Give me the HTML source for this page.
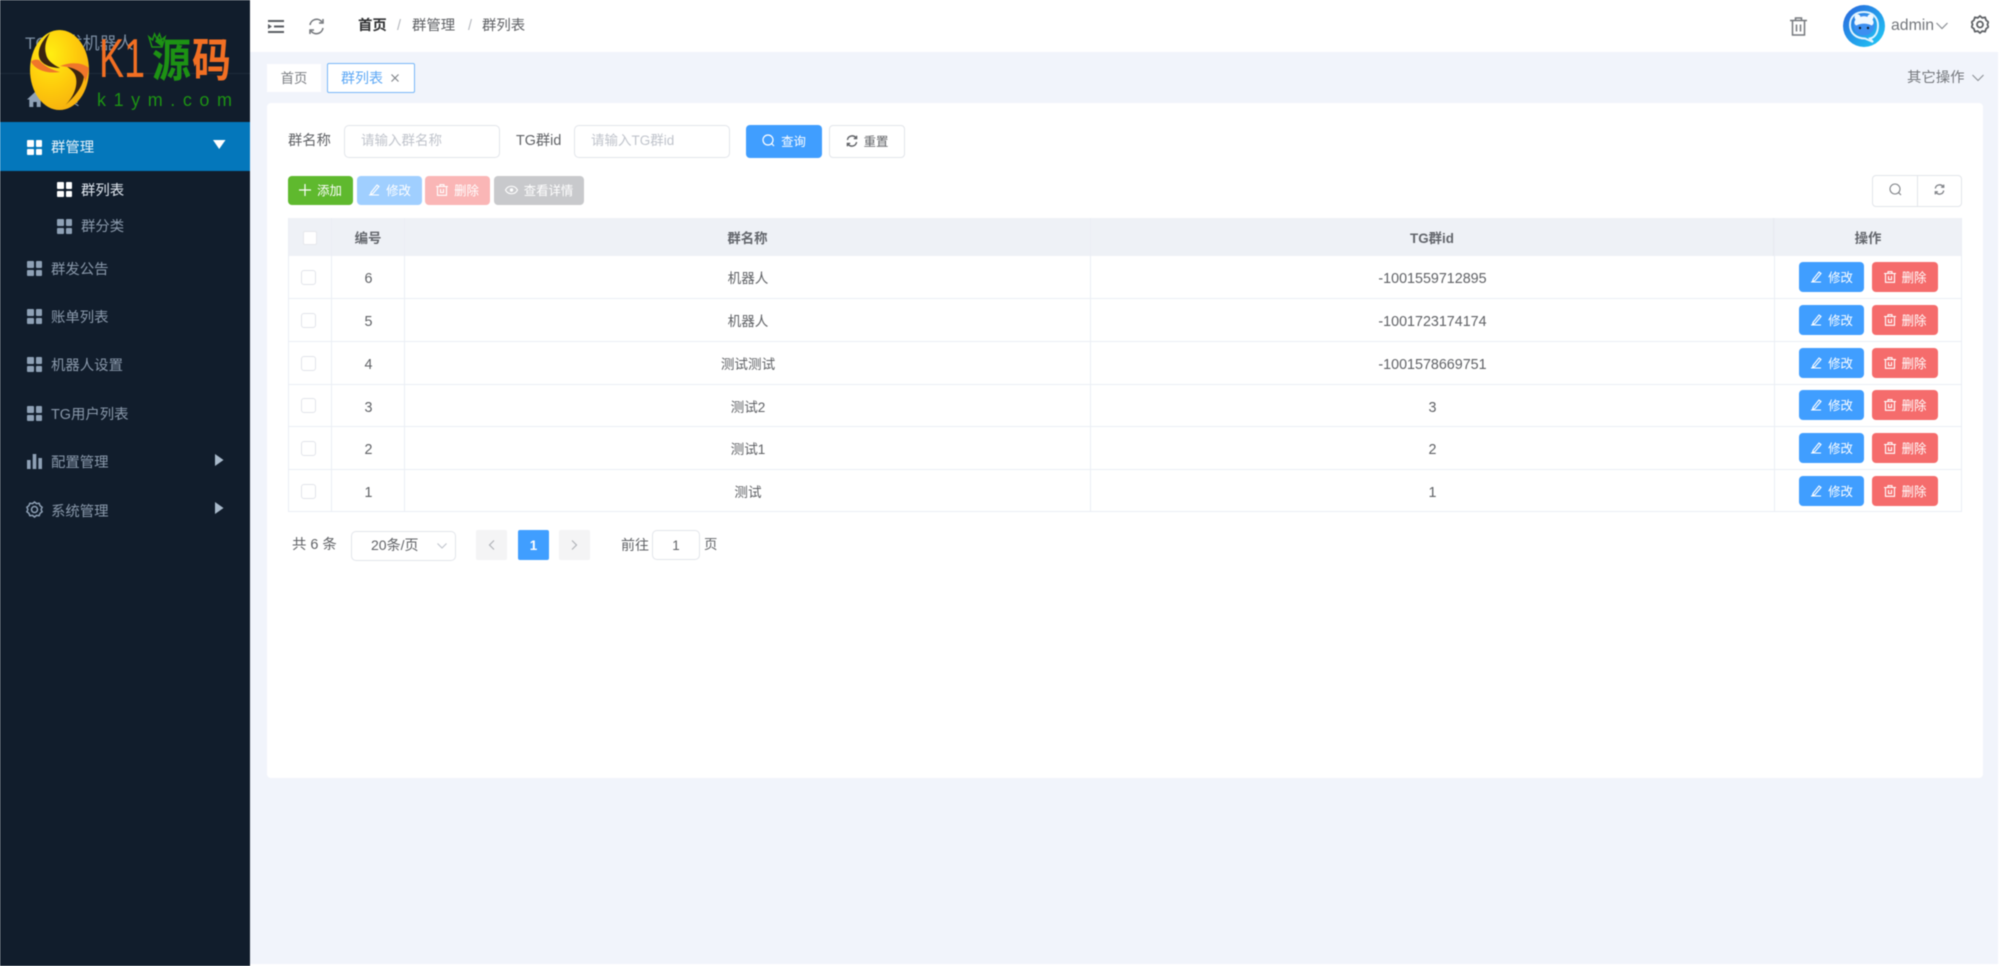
<!DOCTYPE html>
<html lang="zh">
<head>
<meta charset="utf-8">
<title>群列表</title>
<style>
html,body{margin:0;padding:0;width:2000px;height:966px;overflow:hidden;background:#fff}
body{font-family:"Liberation Sans","Noto Sans CJK SC",sans-serif;color:#606266}
#p{position:absolute;left:0;top:0;width:2000px;height:966px;overflow:hidden;filter:blur(.5px)}
.a{position:absolute;box-sizing:border-box;white-space:nowrap}
.c{display:flex;align-items:center;justify-content:center}
.m{color:#8a99ab;font-size:14.4px;line-height:20px;left:51px}
.g{position:absolute;width:15px;height:15px}
.g i{position:absolute;width:6.5px;height:6.5px;background:#8fa1b6;border-radius:1px}
.g i:nth-child(1){left:0;top:0}.g i:nth-child(2){right:0;top:0}.g i:nth-child(3){left:0;bottom:0}.g i:nth-child(4){right:0;bottom:0}
.w i{background:#fff}
.in{border:1.4px solid #e2e5ea;border-radius:5px;background:#fff}
.ph{color:#c0c4cc;font-size:13.5px}
.btn{border-radius:4px;color:#fff;font-size:12.4px;gap:6px}
.up{padding-bottom:2px}
.btn svg{flex:none}
.h{background:#eef1f6;height:38px;top:218px;color:#63666c;font-size:13.4px;font-weight:700;border-right:1px solid #e7eaf0}
.d{font-size:13.6px;color:#606266}
.n{font-size:14.3px;color:#606266;padding-top:3px}
.ln{height:1.3px;background:#ebeef5;left:288px;width:1674px}
.vl{width:1.3px;background:#ebeef5;top:218px;height:294px}
.cb{width:15px;height:15px;left:301px;border:1.3px solid #e2e4ea;border-radius:3px;background:#fff}
</style>
</head>
<body>
<div id="p">
<!-- content background -->
<div class="a" style="left:250px;top:52px;width:1748px;height:912px;background:#f1f4fb"></div>
<!-- sidebar -->
<div class="a" style="left:0;top:0;width:250px;height:966px;background:#111d2c"></div>
<div class="a" style="left:0;top:73px;width:250px;height:1px;background:#1d2a3a"></div>
<div class="a" style="left:25px;top:33px;font-size:17px;line-height:22px;color:#7c8ea3">TG群发机器人</div>
<svg class="a" style="left:27px;top:92px" width="16" height="15" viewBox="0 0 16 15"><path d="M8 0L0 7.5h2.3V15h4v-5h3.4v5h4V7.5H16z" fill="#8fa1b6"/></svg>
<div class="a m" style="left:51px;top:91px">首页</div>
<div class="a" style="left:0;top:122px;width:250px;height:49px;background:#0477bb"></div>
<div class="g w" style="left:27px;top:140px"><i></i><i></i><i></i><i></i></div>
<div class="a m" style="top:138px;color:#e8f1f8">群管理</div>
<svg class="a" style="left:213px;top:139px" width="13" height="11"><path d="M0 1h12.5L6.2 10z" fill="#fff"/></svg>
<div class="g w" style="left:57px;top:182px"><i></i><i></i><i></i><i></i></div>
<div class="a m" style="left:81px;top:181px;color:#dfe6ee">群列表</div>
<div class="g" style="left:57px;top:219px"><i></i><i></i><i></i><i></i></div>
<div class="a m" style="left:81px;top:217px">群分类</div>
<div class="g" style="left:27px;top:261px"><i></i><i></i><i></i><i></i></div>
<div class="a m" style="top:260px">群发公告</div>
<div class="g" style="left:27px;top:309px"><i></i><i></i><i></i><i></i></div>
<div class="a m" style="top:308px">账单列表</div>
<div class="g" style="left:27px;top:357px"><i></i><i></i><i></i><i></i></div>
<div class="a m" style="top:356px">机器人设置</div>
<div class="g" style="left:27px;top:406px"><i></i><i></i><i></i><i></i></div>
<div class="a m" style="top:405px">TG用户列表</div>
<svg class="a" style="left:27px;top:454px" width="15" height="15"><path d="M0 6h3.6v9H0zM5.7 0h3.6v15H5.7zM11.4 4H15v11h-3.6z" fill="#8fa1b6"/></svg>
<div class="a m" style="top:453px">配置管理</div>
<svg class="a" style="left:215px;top:454px" width="9" height="12"><path d="M0 0l8.5 6L0 12z" fill="#a9bacb"/></svg>
<svg class="a" style="left:26px;top:501px" width="17" height="17" viewBox="0 0 17 17"><path d="M8.5 1l2 1.6 2.6-.3 1 2.4 2 1.6-1 2.2 1 2.2-2 1.6-1 2.400-2.600-.3-2 1.600-2-1.600-2.600.3-1-2.400-2-1.600 1-2.200-1-2.200 2-1.600 1-2.400 2.600.3z" fill="none" stroke="#8fa1b6" stroke-width="1.500"/><circle cx="8.500" cy="8.500" r="3" fill="none" stroke="#8fa1b6" stroke-width="1.500"/></svg>
<div class="a m" style="top:502px">系统管理</div>
<svg class="a" style="left:215px;top:502px" width="9" height="12"><path d="M0 0l8.500 6L0 12z" fill="#a9bacb"/></svg>
<!-- logo -->
<svg class="a" style="left:20px;top:20px" width="225" height="100" viewBox="20 20 225 100">
<defs>
<radialGradient id="y" cx=".35" cy=".3" r=".85"><stop offset="0" stop-color="#ffee12"/><stop offset=".5" stop-color="#fecb0c"/><stop offset="1" stop-color="#f5a90f"/></radialGradient>
</defs>
<ellipse cx="59.500" cy="70" rx="29.500" ry="40" fill="url(#y)"/>
<path d="M50 33C40 42 35 55 42 62C47 67 55 68 60 68C52 64 47 60 46 54C44 47 46 40 50 33z" fill="#3a2510"/>
<path d="M66 66C74 66 84 68 84 75C84 86 74 98 62 108C72 100 78 88 76 78C75 72 70 69 66 66z" fill="#3a2510"/>
<path d="M31 62C36 70 46 74 60 72C52 70 44 66 39 60C36 59 32 60 31 62z" fill="#f0762a"/>
<path d="M60 66C70 62 82 62 89 68C88 74 87 78 85 82C85 72 74 67 60 66z" fill="#f0762a"/>
<text x="99" y="77" font-family="Liberation Sans" font-size="55" fill="#f26f23" textLength="46" lengthAdjust="spacingAndGlyphs">K1</text>
<g transform="translate(0,80) scale(1,1.180) translate(0,-80)">
<text x="152" y="77" font-family="Noto Sans CJK SC" font-weight="700" font-size="39" fill="#1d9214">源</text>
<text x="192" y="77" font-family="Noto Sans CJK SC" font-weight="700" font-size="39" fill="#f26f23">码</text>
</g>
<path d="M149 37l3 10h10l3-10-3.500 3-2-6-2.500 5-2.500-5-2 6z" fill="none" stroke="#1d9214" stroke-width="1.500"/>
<text x="97" y="106" font-family="Liberation Sans" font-size="18" fill="#1d9214" textLength="135">k1ym.com</text>
</svg>
<!-- top bar -->
<svg class="a" style="left:268px;top:20px" width="16" height="13" viewBox="0 0 16 13"><path d="M0 1h16M6 6.500h10M0 12h16" stroke="#5b5e63" stroke-width="2" fill="none"/><path d="M0 4l4 2.500L0 9z" fill="#5b5e63"/></svg>
<svg class="a" style="left:308px;top:18px" width="17" height="17" viewBox="0 0 17 17"><path d="M2 7a6.700 6.700 0 0 1 12-3M15 10a6.700 6.700 0 0 1-12 3" fill="none" stroke="#73767b" stroke-width="1.500"/><path d="M15 1v4h-4M2 16v-4h4" fill="none" stroke="#73767b" stroke-width="1.500"/></svg>
<div class="a" style="left:358px;top:16px;font-size:14.400px;line-height:20px;font-weight:700;color:#303133">首页</div>
<div class="a" style="left:397px;top:16px;font-size:14.400px;line-height:20px;color:#b4b7bd">/</div>
<div class="a" style="left:412px;top:16px;font-size:14.400px;line-height:20px">群管理</div>
<div class="a" style="left:468px;top:16px;font-size:14.400px;line-height:20px;color:#b4b7bd">/</div>
<div class="a" style="left:482px;top:16px;font-size:14.400px;line-height:20px">群列表</div>
<svg class="a" style="left:1790px;top:17px" width="17" height="19" viewBox="0 0 17 19"><path d="M0 3.500h17M5.500 3V1h6v2M2.500 4v14h12V4M6.500 7.500v7M10.500 7.500v7" fill="none" stroke="#75787d" stroke-width="1.500"/></svg>
<svg class="a" style="left:1843px;top:5px" width="42" height="42" viewBox="0 0 42 42">
<defs><linearGradient id="av" x1="0" y1="0" x2="1" y2="1"><stop offset="0" stop-color="#2a63dc"/><stop offset="1" stop-color="#1fcdf6"/></linearGradient></defs>
<circle cx="21" cy="21" r="21" fill="url(#av)"/>
<path d="M21 7c8.500 0 14 5.500 14 13.500 0 7-3 12-8 13l3 3.500-8-3.500c-8.500 0-15-5-15-13.500S12.500 7 21 7z" fill="none" stroke="#dff3ff" stroke-width="2"/>
<circle cx="21" cy="20" r="10.500" fill="#3d8ff0"/>
<path d="M12.500 14.500a3 3 0 1 1 5-2.500c2-1 5-1 7 0a3 3 0 1 1 5 2.500c2 3 1 5-1 6-4-2.500-11-2.500-15 0-2-1-3-3-1-6z" fill="#f0f8ff"/>
<circle cx="17" cy="23" r="1.200" fill="#123"/><circle cx="25" cy="23" r="1.200" fill="#123"/>
</svg>
<div class="a" style="left:1891px;top:16px;font-size:15.800px;line-height:20px;color:#74777c">admin</div>
<svg class="a" style="left:1936px;top:22px" width="12" height="8"><path d="M.500 1l5.500 5.500L11.500 1" fill="none" stroke="#8b8e93" stroke-width="1.200"/></svg>
<svg class="a" style="left:1971px;top:15px" width="18" height="19" viewBox="0 0 18 19"><path d="M9 1l2.200 1.900 2.900-.5 1 2.800 2.300 1.800-1 2.500 1 2.500-2.300 1.800-1 2.800-2.900-.5L9 18l-2.200-1.900-2.900.5-1-2.800L.6 12l1-2.500-1-2.500 2.300-1.800 1-2.800 2.900.5z" fill="none" stroke="#5f6266" stroke-width="1.800"/><circle cx="9" cy="9.500" r="3" fill="none" stroke="#5f6266" stroke-width="1.800"/></svg>
<!-- tabs -->
<div class="a c" style="left:267px;top:64px;width:54px;height:28px;background:#fff;font-size:13.400px;color:#7a7d82;padding-bottom:2px">首页</div>
<div class="a" style="left:327px;top:63px;width:88px;height:30px;background:#fff;border:1.300px solid #78b7f7;border-radius:2px"></div>
<div class="a" style="left:341px;top:68px;font-size:14px;line-height:20px;color:#5da8f5">群列表</div>
<svg class="a" style="left:391px;top:74px" width="8" height="8"><path d="M.5.5l7 7M7.500.5l-7 7" stroke="#7e8186" stroke-width="1.100"/></svg>
<div class="a" style="left:1907px;top:68px;font-size:14.400px;line-height:20px;color:#74777c">其它操作</div>
<svg class="a" style="left:1972px;top:74px" width="12" height="8"><path d="M.5 1l5.500 5.500L11.500 1" fill="none" stroke="#8b8e93" stroke-width="1.100"/></svg>
<!-- card -->
<div class="a" style="left:267px;top:103px;width:1716px;height:675px;background:#fff;border-radius:4px"></div>
<div class="a" style="left:288px;top:131px;font-size:14.300px;line-height:20px;color:#606266">群名称</div>
<div class="a in" style="left:344px;top:125px;width:156px;height:33px"></div>
<div class="a ph" style="left:361px;top:131px;line-height:20px">请输入群名称</div>
<div class="a" style="left:516px;top:131px;font-size:14.300px;line-height:20px;color:#606266">TG群id</div>
<div class="a in" style="left:574px;top:125px;width:156px;height:33px"></div>
<div class="a ph" style="left:591px;top:131px;line-height:20px">请输入TG群id</div>
<div class="a c btn up" style="left:746px;top:125px;width:76px;height:33px;background:#409eff">
<svg width="13" height="13"><circle cx="6" cy="6" r="5" fill="none" stroke="#fff" stroke-width="1.200"/><path d="M9.500 9.500L12 12" stroke="#fff" stroke-width="1.200"/></svg>查询</div>
<div class="a c btn up" style="left:829px;top:125px;width:76px;height:33px;background:#fff;border:1.400px solid #e2e5ea;color:#606266">
<svg width="12" height="12" viewBox="0 0 17 17"><path d="M2 7a6.700 6.700 0 0 1 12-3M15 10a6.700 6.700 0 0 1-12 3M15 1v4h-4M2 16v-4h4" fill="none" stroke="#606266" stroke-width="2"/></svg>重置</div>
<!-- action buttons -->
<div class="a c btn up" style="left:288px;top:176px;width:65px;height:29px;background:#5fb92e"><svg width="12" height="12"><path d="M6 0v12M0 6h12" stroke="#fff" stroke-width="1.200"/></svg>添加</div>
<div class="a c btn up" style="left:357px;top:176px;width:65px;height:29px;background:#a0cfff"><svg width="12" height="12" viewBox="0 0 12 12"><path d="M1 11h10M3 8.500L9 1l2 1.500-6 7-2.500.8z" fill="none" stroke="#fff" stroke-width="1.100"/></svg>修改</div>
<div class="a c btn up" style="left:425px;top:176px;width:65px;height:29px;background:#fab6b6"><svg width="12" height="12" viewBox="0 0 12 12"><path d="M0 2.500h12M4 2V.7h4V2M1.500 3v8.300h9V3M4.500 5v3.500h3V5" fill="none" stroke="#fff" stroke-width="1.100"/></svg>删除</div>
<div class="a c btn up" style="left:494px;top:176px;width:90px;height:29px;background:#c8c9cc"><svg width="13" height="10" viewBox="0 0 13 10"><path d="M.5 5C3 0 10 0 12.500 5 10 10 3 10 .5 5z" fill="none" stroke="#fff" stroke-width="1.100"/><circle cx="6.500" cy="5" r="1.700" fill="#fff"/></svg>查看详情</div>
<div class="a" style="left:1872px;top:175px;width:90px;height:32px;border:1.400px solid #e2e5ea;border-radius:4px;background:#fff"></div>
<div class="a" style="left:1917px;top:175px;width:1.400px;height:32px;background:#e2e5ea"></div>
<svg class="a" style="left:1889px;top:183px" width="13" height="13"><circle cx="6" cy="6" r="5" fill="none" stroke="#808388" stroke-width="1.100"/><path d="M9.500 9.500L12 12" stroke="#808388" stroke-width="1.100"/></svg>
<svg class="a" style="left:1934px;top:184px" width="11" height="11" viewBox="0 0 17 17"><path d="M2 7a6.700 6.700 0 0 1 12-3M15 10a6.700 6.700 0 0 1-12 3M15 1v4h-4M2 16v-4h4" fill="none" stroke="#808388" stroke-width="2"/></svg>
<!-- table header -->
<div class="a h" style="left:288px;width:44px"></div>
<div class="a h c" style="left:332px;width:73px">编号</div>
<div class="a h c" style="left:405px;width:686px">群名称</div>
<div class="a h c" style="left:1091px;width:683px">TG群id</div>
<div class="a h c" style="left:1774px;width:188px;border-right:0">操作</div>
<div class="a" style="left:303px;top:231px;width:14px;height:14px;background:#fff;border-radius:2px;border:1px solid #e6e8ec"></div>
<!-- table lines -->
<div class="a ln" style="top:298px"></div><div class="a ln" style="top:341px"></div><div class="a ln" style="top:384px"></div><div class="a ln" style="top:426px"></div><div class="a ln" style="top:469px"></div><div class="a ln" style="top:511px"></div>
<div class="a vl" style="left:288px"></div><div class="a vl" style="left:331px"></div><div class="a vl" style="left:404px"></div><div class="a vl" style="left:1090px"></div><div class="a vl" style="left:1774px"></div><div class="a vl" style="left:1961px"></div>
<!-- rows -->
<div class="a cb" style="top:270px"></div><div class="a n c" style="left:332px;top:256px;width:73px;height:42px">6</div><div class="a d c" style="left:405px;top:256px;width:686px;height:42px">机器人</div><div class="a n c" style="left:1091px;top:256px;width:683px;height:42px">-1001559712895</div>
<div class="a cb" style="top:313px"></div><div class="a n c" style="left:332px;top:299px;width:73px;height:42px">5</div><div class="a d c" style="left:405px;top:299px;width:686px;height:42px">机器人</div><div class="a n c" style="left:1091px;top:299px;width:683px;height:42px">-1001723174174</div>
<div class="a cb" style="top:356px"></div><div class="a n c" style="left:332px;top:342px;width:73px;height:42px">4</div><div class="a d c" style="left:405px;top:342px;width:686px;height:42px">测试测试</div><div class="a n c" style="left:1091px;top:342px;width:683px;height:42px">-1001578669751</div>
<div class="a cb" style="top:398px"></div><div class="a n c" style="left:332px;top:385px;width:73px;height:42px">3</div><div class="a d c" style="left:405px;top:385px;width:686px;height:42px">测试2</div><div class="a n c" style="left:1091px;top:385px;width:683px;height:42px">3</div>
<div class="a cb" style="top:441px"></div><div class="a n c" style="left:332px;top:427px;width:73px;height:42px">2</div><div class="a d c" style="left:405px;top:427px;width:686px;height:42px">测试1</div><div class="a n c" style="left:1091px;top:427px;width:683px;height:42px">2</div>
<div class="a cb" style="top:484px"></div><div class="a n c" style="left:332px;top:470px;width:73px;height:42px">1</div><div class="a d c" style="left:405px;top:470px;width:686px;height:42px">测试</div><div class="a n c" style="left:1091px;top:470px;width:683px;height:42px">1</div>
<!-- row buttons -->
<div class="a c btn" style="left:1799px;top:262px;width:65px;height:30px;background:#409eff"><svg width="12" height="12" viewBox="0 0 12 12"><path d="M1 11h10M3 8.500L9 1l2 1.500-6 7-2.500.8z" fill="none" stroke="#fff" stroke-width="1.100"/></svg>修改</div>
<div class="a c btn" style="left:1872px;top:262px;width:66px;height:30px;background:#f56c6c"><svg width="12" height="12" viewBox="0 0 12 12"><path d="M0 2.500h12M4 2V.7h4V2M1.500 3v8.300h9V3M4.500 5v3.500h3V5" fill="none" stroke="#fff" stroke-width="1.100"/></svg>删除</div>
<div class="a c btn" style="left:1799px;top:305px;width:65px;height:30px;background:#409eff"><svg width="12" height="12" viewBox="0 0 12 12"><path d="M1 11h10M3 8.500L9 1l2 1.500-6 7-2.500.8z" fill="none" stroke="#fff" stroke-width="1.100"/></svg>修改</div>
<div class="a c btn" style="left:1872px;top:305px;width:66px;height:30px;background:#f56c6c"><svg width="12" height="12" viewBox="0 0 12 12"><path d="M0 2.500h12M4 2V.7h4V2M1.500 3v8.300h9V3M4.500 5v3.500h3V5" fill="none" stroke="#fff" stroke-width="1.100"/></svg>删除</div>
<div class="a c btn" style="left:1799px;top:348px;width:65px;height:30px;background:#409eff"><svg width="12" height="12" viewBox="0 0 12 12"><path d="M1 11h10M3 8.500L9 1l2 1.500-6 7-2.500.8z" fill="none" stroke="#fff" stroke-width="1.100"/></svg>修改</div>
<div class="a c btn" style="left:1872px;top:348px;width:66px;height:30px;background:#f56c6c"><svg width="12" height="12" viewBox="0 0 12 12"><path d="M0 2.500h12M4 2V.7h4V2M1.500 3v8.300h9V3M4.500 5v3.500h3V5" fill="none" stroke="#fff" stroke-width="1.100"/></svg>删除</div>
<div class="a c btn" style="left:1799px;top:390px;width:65px;height:30px;background:#409eff"><svg width="12" height="12" viewBox="0 0 12 12"><path d="M1 11h10M3 8.500L9 1l2 1.500-6 7-2.500.8z" fill="none" stroke="#fff" stroke-width="1.100"/></svg>修改</div>
<div class="a c btn" style="left:1872px;top:390px;width:66px;height:30px;background:#f56c6c"><svg width="12" height="12" viewBox="0 0 12 12"><path d="M0 2.500h12M4 2V.7h4V2M1.500 3v8.300h9V3M4.500 5v3.500h3V5" fill="none" stroke="#fff" stroke-width="1.100"/></svg>删除</div>
<div class="a c btn" style="left:1799px;top:433px;width:65px;height:30px;background:#409eff"><svg width="12" height="12" viewBox="0 0 12 12"><path d="M1 11h10M3 8.500L9 1l2 1.500-6 7-2.500.8z" fill="none" stroke="#fff" stroke-width="1.100"/></svg>修改</div>
<div class="a c btn" style="left:1872px;top:433px;width:66px;height:30px;background:#f56c6c"><svg width="12" height="12" viewBox="0 0 12 12"><path d="M0 2.500h12M4 2V.7h4V2M1.500 3v8.300h9V3M4.500 5v3.500h3V5" fill="none" stroke="#fff" stroke-width="1.100"/></svg>删除</div>
<div class="a c btn" style="left:1799px;top:476px;width:65px;height:30px;background:#409eff"><svg width="12" height="12" viewBox="0 0 12 12"><path d="M1 11h10M3 8.500L9 1l2 1.500-6 7-2.500.8z" fill="none" stroke="#fff" stroke-width="1.100"/></svg>修改</div>
<div class="a c btn" style="left:1872px;top:476px;width:66px;height:30px;background:#f56c6c"><svg width="12" height="12" viewBox="0 0 12 12"><path d="M0 2.500h12M4 2V.7h4V2M1.500 3v8.300h9V3M4.500 5v3.500h3V5" fill="none" stroke="#fff" stroke-width="1.100"/></svg>删除</div>
<!-- pagination -->
<div class="a" style="left:292px;top:535px;font-size:14.400px;line-height:20px">共 6 条</div>
<div class="a in" style="left:351px;top:531px;width:105px;height:30px"></div>
<div class="a" style="left:371px;top:535px;font-size:14px;line-height:20px">20条/页</div>
<svg class="a" style="left:437px;top:543px" width="10" height="6"><path d="M.5.500l4.500 4.500L9.500.500" fill="none" stroke="#c0c4cc" stroke-width="1.100"/></svg>
<div class="a c" style="left:476px;top:530px;width:31px;height:30px;background:#f4f4f5;border-radius:2px"><svg width="7" height="10"><path d="M6 .500L1.500 5 6 9.500" fill="none" stroke="#b0b3b8" stroke-width="1.200"/></svg></div>
<div class="a c" style="left:518px;top:530px;width:31px;height:30px;background:#409eff;border-radius:2px;color:#fff;font-size:13.400px;font-weight:700">1</div>
<div class="a c" style="left:559px;top:530px;width:31px;height:30px;background:#f4f4f5;border-radius:2px"><svg width="7" height="10"><path d="M1 .500L5.500 5 1 9.500" fill="none" stroke="#b0b3b8" stroke-width="1.200"/></svg></div>
<div class="a" style="left:621px;top:535px;font-size:14px;line-height:20px">前往</div>
<div class="a in c" style="left:652px;top:530px;width:48px;height:30px;font-size:13.400px">1</div>
<div class="a" style="left:704px;top:535px;font-size:13.400px;line-height:20px">页</div>
</div>
</body>
</html>
